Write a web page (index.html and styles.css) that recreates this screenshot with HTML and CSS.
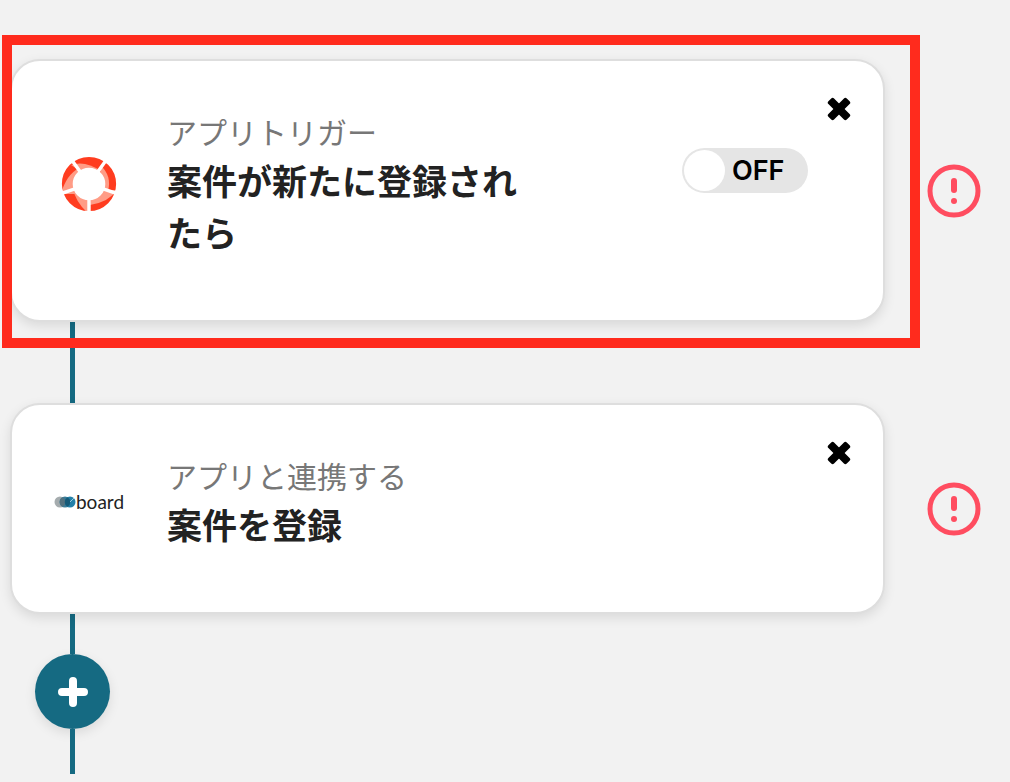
FILE: index.html
```
<!DOCTYPE html>
<html lang="ja">
<head>
  <meta charset="UTF-8" />
  <meta name="viewport" content="width=device-width, initial-scale=1.0"/>
  <title>フロー編集</title>
  <link rel="stylesheet" href="styles.css">
</head>
<body>
  <main class="flow">
    <section class="step">
      <article class="card highlighted">
        <div class="app-icon">
          <svg class="ring-logo" viewBox="0 0 56 56" aria-hidden="true">
            <defs>
              <mask id="ring">
                <circle cx="28" cy="28" r="21.7" fill="none" stroke="#fff" stroke-width="10.8"/>
                <path d="M28 28V58M28 28L-1 38M28 28L10 3M28 28L46 3M28 28L57 38" fill="none" stroke="#000" stroke-width="3.4"/>
              </mask>
            </defs>
            <g mask="url(#ring)">
              <rect width="56" height="56" fill="#ff3c1f"/>
              <path d="M10 9Q24 4 40 15L30 22Z" fill="#ff9c86"/>
              <path d="M40 10Q51 20 47 35L38 28Z" fill="#ff9c86"/>
              <path d="M56 34Q48 46 29 49L30 34Z" fill="#ff9c86"/>
              <path d="M12 33Q15 47 28 58V36Z" fill="#ff9c86"/>
              <path d="M18 12Q5 19 0 38L14 38L24 22Z" fill="#ff9c86"/>
            </g>
          </svg>
        </div>
        <div class="card-text">
          <p class="label">アプリトリガー</p>
          <h2 class="title">案件が新たに登録されたら</h2>
        </div>
        <label class="toggle">
          <input type="checkbox" class="toggle-input">
          <span class="toggle-knob"></span>
          <span class="toggle-text">OFF</span>
        </label>
        <button class="close" type="button" aria-label="削除">
          <svg viewBox="0 0 24 24"><g transform="rotate(45 12 12)"><rect x="-1" y="8" width="26" height="8" rx="2"/><rect x="8" y="-1" width="8" height="26" rx="2"/></g></svg>
        </button>
      </article>
      <svg class="alert" viewBox="0 0 54 54" role="img" aria-label="エラー">
        <circle cx="27" cy="27" r="24"/>
        <path d="M27 17V26"/>
        <circle class="dot" cx="27" cy="37" r="3"/>
      </svg>
    </section>
    <div class="connector"></div>
    <section class="step">
      <article class="card">
        <div class="app-icon">
          <div class="board-logo">
            <svg viewBox="0 0 22 12" aria-hidden="true">
              <circle cx="6" cy="6" r="5.5" fill="#a5acae"/>
              <circle cx="11" cy="6" r="5.5" fill="#3c7c96"/>
              <circle cx="16" cy="6" r="5.5" fill="#2380a8"/>
              <path d="M8.5 1.2A5.5 5.5 0 0 1 8.5 10.8A5.5 5.5 0 0 1 8.5 1.2Z" fill="#54717e"/>
              <path d="M13.5 1.2A5.5 5.5 0 0 1 13.5 10.8A5.5 5.5 0 0 1 13.5 1.2Z" fill="#155a78"/>
              <path d="M16 6L20 2" stroke="#9cc9da" fill="none"/>
            </svg>
            <span>board</span>
          </div>
        </div>
        <div class="card-text">
          <p class="label">アプリと連携する</p>
          <h2 class="title">案件を登録</h2>
        </div>
        <button class="close" type="button" aria-label="削除">
          <svg viewBox="0 0 24 24"><g transform="rotate(45 12 12)"><rect x="-1" y="8" width="26" height="8" rx="2"/><rect x="8" y="-1" width="8" height="26" rx="2"/></g></svg>
        </button>
      </article>
      <svg class="alert" viewBox="0 0 54 54" role="img" aria-label="エラー">
        <circle cx="27" cy="27" r="24"/>
        <path d="M27 17V26"/>
        <circle class="dot" cx="27" cy="37" r="3"/>
      </svg>
    </section>
    <div class="connector short"></div>
    <button class="add" type="button" aria-label="追加">
      <svg viewBox="0 0 30 30"><path d="M15 4V26M4 15H26"/></svg>
    </button>
    <div class="connector end"></div>
  </main>
</body>
</html>
```
FILE: styles.css
```
*{margin:0;padding:0;box-sizing:border-box}
body{background:#f2f2f2;font-family:"Liberation Sans","Noto Sans CJK JP",sans-serif;color:#222}
button{border:none;background:none;cursor:pointer}
svg{display:block}
.flow{padding:59px 29px 8px 10px}
.step{display:flex;align-items:center;gap:42px}

.card{position:relative;flex:1;display:flex;align-items:center;padding:48px 32px 62px 42px;background:#fff;border:2px solid #dedede;border-radius:30px;box-shadow:0 4px 12px rgba(0,0,0,0.1)}
.highlighted::after{content:'';position:absolute;top:-26px;right:-37px;bottom:-28px;left:-10px;border:10px solid #ff2b1d;z-index:1;pointer-events:none}
.app-icon{width:70px;display:flex;justify-content:center}
.ring-logo{width:56px;height:56px}
.board-logo{display:flex;align-items:center;font:400 19px/20px Lato,sans-serif;color:#222}
.board-logo svg{width:22px;height:12px}
.card-text{width:352px;margin-left:43px}
.label{font-size:30px;line-height:44px;color:#777;margin-bottom:1px;font-family:"Noto Sans CJK JP",sans-serif;font-weight:400}
.title{font-size:35px;line-height:52px;font-family:"Noto Sans CJK JP",sans-serif;font-weight:700}

.toggle{align-self:flex-start;display:flex;align-items:center;gap:7px;width:126px;height:45px;margin:39px 19px 0 auto;padding:2px;border-radius:24px;background:#e5e5e5;cursor:pointer}
.toggle-input{position:absolute;opacity:0}
.toggle-knob{width:41px;height:41px;border-radius:50%;background:#fff}
.toggle-text{font:600 27px/41px Inter,sans-serif;color:#000}
.close{align-self:flex-start;width:24px;height:24px;margin:-12px 0 0 auto}
.toggle + .close{margin-left:0}
.close svg{width:24px;height:24px}

.alert{width:54px;height:54px;fill:none;stroke:#ff4d60;stroke-width:5;stroke-linecap:round}
.alert path{stroke-width:6}
.alert .dot{fill:#ff4d60;stroke:none}

.connector{width:5px;height:81px;margin-left:60px;background:#156a82}
.short{height:40px}
.end{height:45px}
.add{display:flex;align-items:center;justify-content:center;width:75px;height:75px;margin-left:25px;border-radius:50%;background:#156a82;box-shadow:0 4px 12px rgba(0,0,0,0.1)}
.add svg{width:30px;height:30px}
.add path{fill:none;stroke:#fff;stroke-width:8;stroke-linecap:round}
```
